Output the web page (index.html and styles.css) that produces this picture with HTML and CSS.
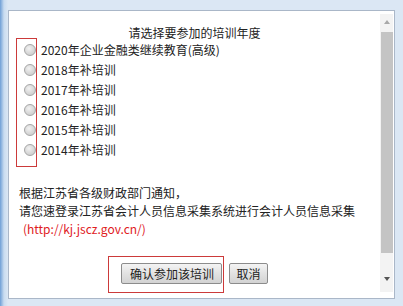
FILE: index.html
```html
<!DOCTYPE html>
<html lang="zh-CN">
<head>
<meta charset="UTF-8" />
<title>选择培训年度</title>
<link rel="stylesheet" href="styles.css">
</head>
<body>

<div class="win">
  <div class="content">
    <p class="title">请选择要参加的培训年度</p>

    <ul class="options">
      <li><span class="radio"></span>2020年企业金融类继续教育(高级)</li>
      <li><span class="radio"></span>2018年补培训</li>
      <li><span class="radio"></span>2017年补培训</li>
      <li><span class="radio"></span>2016年补培训</li>
      <li><span class="radio"></span>2015年补培训</li>
      <li><span class="radio"></span>2014年补培训</li>
    </ul>

    <p class="notice">
      根据江苏省各级财政部门通知，<br>
      请您速登录江苏省会计人员信息采集系统进行会计人员信息采集<br>
      <span class="link">(http://kj.jscz.gov.cn/)</span>
    </p>

    <div class="actions">
      <button class="btn btn-ok">确认参加该培训</button>
      <button class="btn">取消</button>
    </div>

    <!-- 红框标注 -->
    <div class="mark mark-radios"></div>
    <div class="mark mark-ok"></div>
  </div>

  <div class="scrollbar">
    <span class="arrow arrow-up"></span>
    <span class="thumb"></span>
    <span class="arrow arrow-down"></span>
  </div>
</div>

</body>
</html>
```

FILE: styles.css
```css
body { margin: 0; width: 403px; height: 306px; overflow: hidden; background: linear-gradient(90deg, #6f9fd6 0, #c9dcf0 4px, #dbe7f4 8px); font-family: "Noto Sans CJK SC", "Liberation Sans", sans-serif; font-size: 12px; color: #222; }
.win { margin: 10px 8px 0 8px; height: 287px; border: 1px solid #aab7c8; background: #fff; display: flex; }
.content { flex: 1; position: relative; padding-top: 13px; }
.title { margin: 0; line-height: 18px; text-align: center; }
.options { list-style: none; margin: -2px 0 0 0; padding: 0 0 0 15px; }
.options li { display: flex; align-items: center; height: 20px; line-height: 20px; }
.radio { width: 10px; height: 10px; margin-right: 5px; border: 1px solid #a6a6a6; border-radius: 50%; background: radial-gradient(circle at 40% 35%, #f2f2f2 0, #dcdcdc 45%, #c4c4c4 100%); }
.notice { margin: 24px 0 0 0; padding-left: 10px; line-height: 18px; }
.link { color: #e0201e; padding-left: 4px; }
.actions { display: flex; justify-content: center; gap: 7px; margin-top: 25px; }
.btn { height: 21px; padding: 0 6px; border: 1px solid #8c8c8c; border-radius: 2px; background: linear-gradient(#f4f4f4, #e2e2e2 50%, #d3d3d3); font-family: inherit; font-size: 12px; color: #222; line-height: 19px; }
.btn-ok { width: 101px; }
.mark { position: absolute; border: 1px solid #cc3a3a; }
.mark-radios { left: 7px; top: 27px; width: 19px; height: 127px; }
.mark-ok { left: 99px; top: 245px; width: 114px; height: 35px; }
.scrollbar { width: 13px; margin: 3px 1px 6px 0; background: #f3f3f3; display: flex; flex-direction: column; align-items: center; }
.arrow { width: 0; height: 0; border-left: 3px solid transparent; border-right: 3px solid transparent; margin: 6px 0; }
.arrow-up { border-bottom: 4px solid #a8a8a8; }
.arrow-down { border-top: 4px solid #555; margin-top: auto; margin-bottom: 11px; }
.thumb { width: 12px; height: 221px; background: #c4c4c4; margin-top: 2px; }
```
